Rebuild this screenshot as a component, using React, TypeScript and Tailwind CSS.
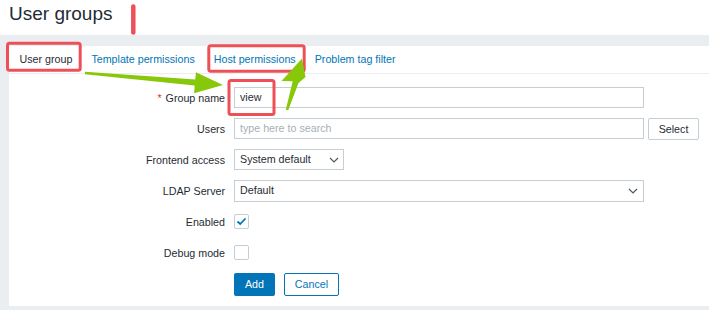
import React from "react";

function Chevron() {
  return (
    <svg width="10" height="6" viewBox="0 0 10 6" className="shrink-0">
      <polyline points="1,1 5,5 9,1" fill="none" stroke="#4f5a60" strokeWidth="1.2" />
    </svg>
  );
}

function Row({ label, required, children }: { label: string; required?: boolean; children: React.ReactNode }) {
  return (
    <div className="flex items-center h-[21px]">
      <div className="w-[216px] text-right text-[10.7px] text-[#1f2c33] leading-[14px]">
        {required && <span className="text-[#e33734] mr-[4px]">*</span>}
        {label}
      </div>
      <div className="ml-[9px] flex items-center">{children}</div>
    </div>
  );
}

export default function App() {
  return (
    <div className="relative w-[709px] h-[310px] overflow-hidden bg-[#ebeef0] font-['Liberation_Sans',Arial,sans-serif]">
      <div className="h-[35px] bg-white pl-[9px] pt-[3px]">
        <h1 className="text-[19px] leading-[22px] text-[#1f2c33]">User groups</h1>
      </div>
      <div className="pt-[11px] pl-[9px]">
        <div className="bg-white pb-[10px]">
          <div className="flex h-[28px] border-b border-[#ebeef0] pl-px text-[10.7px] leading-[27px]">
            <span className="px-[9.5px] text-[#1f2c33]">User group</span>
            <span className="px-[9.5px] text-[#0275b8]">Template permissions</span>
            <span className="px-[9.5px] text-[#0275b8]">Host permissions</span>
            <span className="px-[9.5px] text-[#0275b8]">Problem tag filter</span>
          </div>
          <div className="pt-[13px] flex flex-col gap-[10px]">
            <Row label="Group name" required>
              <div className="w-[410px] h-[21px] border border-[#c5ced3] pl-[5px] text-[10.7px] leading-[19px] text-[#1f2c33]">view</div>
            </Row>
            <Row label="Users">
              <div className="w-[410px] h-[21px] border border-[#c5ced3] pl-[5px] text-[10.7px] leading-[19px] text-[#a5b0b6]">type here to search</div>
              <div className="ml-[4px] w-[51px] h-[22px] border border-[#c5ced3] rounded-[2px] text-center text-[10.7px] leading-[20px] text-[#1f2c33]">Select</div>
            </Row>
            <Row label="Frontend access">
              <div className="w-[110px] h-[21px] border border-[#c5ced3] pl-[5px] pr-[4px] flex items-center justify-between text-[10.7px] text-[#1f2c33]">
                <span>System default</span>
                <Chevron />
              </div>
            </Row>
            <Row label="LDAP Server">
              <div className="w-[410px] h-[22px] border border-[#c5ced3] pl-[5px] pr-[5px] flex items-center justify-between text-[10.7px] text-[#1f2c33]">
                <span>Default</span>
                <Chevron />
              </div>
            </Row>
            <Row label="Enabled">
              <div className="w-[15px] h-[15px] border border-[#c5ced3] rounded-[2px] flex items-center justify-center">
                <svg width="11" height="9" viewBox="0 0 11 9">
                  <polyline points="1.5,4.5 4.2,7 9.5,1.5" fill="none" stroke="#0275b8" strokeWidth="1.8" />
                </svg>
              </div>
            </Row>
            <Row label="Debug mode">
              <div className="w-[15px] h-[15px] border border-[#c5ced3] rounded-[2px]" />
            </Row>
            <div className="flex h-[23px] pl-[225px] gap-[9px] text-[10.7px]">
              <div className="w-[41px] h-[23px] bg-[#0275b8] rounded-[2px] text-white text-center leading-[23px]">Add</div>
              <div className="w-[55px] h-[23px] border border-[#0275b8] rounded-[2px] text-[#0275b8] text-center leading-[21px]">Cancel</div>
            </div>
          </div>
        </div>
      </div>
      <svg className="absolute inset-0 pointer-events-none" width="709" height="310" viewBox="0 0 709 310">
        <line x1="133.3" y1="6.5" x2="133.3" y2="32.5" stroke="#ef5058" strokeWidth="4.5" strokeLinecap="round" />
        <rect x="7.5" y="43.2" width="72.7" height="27" rx="2" fill="none" stroke="#ef5058" strokeWidth="3" />
        <rect x="208.8" y="45.8" width="95.4" height="25.4" rx="2" fill="none" stroke="#ef5058" strokeWidth="3" />
        <rect x="229" y="80.5" width="45" height="34" rx="2" fill="none" stroke="#ef5058" strokeWidth="3" />
        <polygon
          points="85.1,71.8 195.3,79.6 195.9,72.2 223,85 194.1,93.2 194.7,85.6 84.9,74.2"
          fill="#88c80a"
        />
        <polygon
          points="285.8,109.7 292.7,81.3 281.5,81 302,58.5 305.5,77 298.5,82.9 288.2,110.3"
          fill="#88c80a"
        />
      </svg>
    </div>
  );
}
